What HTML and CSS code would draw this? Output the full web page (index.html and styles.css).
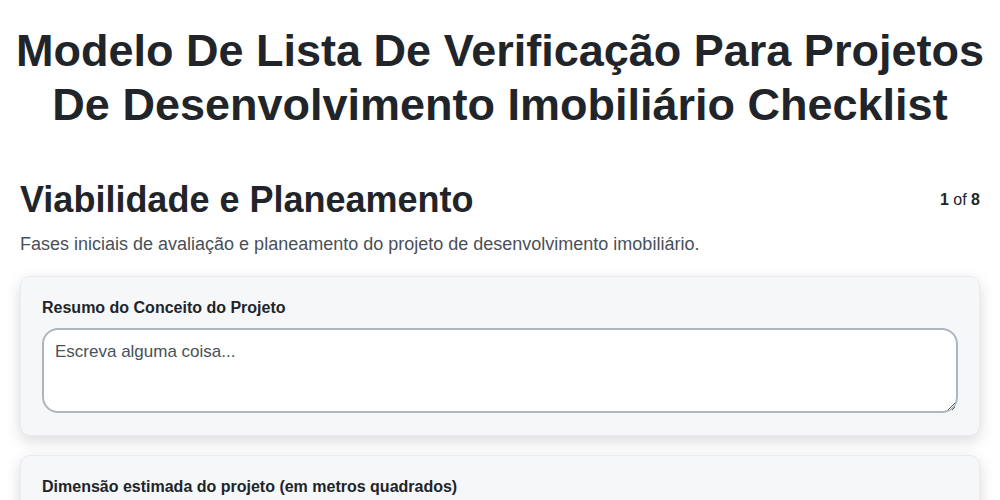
FILE: index.html
```html
<!DOCTYPE html>
<html>

<head>
    <meta charset="utf-8">
    <title>Modelo De Lista De Verificação</title>
    <link rel="stylesheet" href="styles.css">
</head>

<body>

    <h1 class="page_title">Modelo De Lista De Verificação Para Projetos De Desenvolvimento Imobiliário Checklist</h1>

    <div class="section_head">
        <h2 class="section_title">Viabilidade e Planeamento</h2>
        <div class="step_count"><b>1</b> of <b>8</b></div>
    </div>
    <p class="section_desc">Fases iniciais de avaliação e planeamento do projeto de desenvolvimento imobiliário.</p>

    <div class="card">
        <label class="label_text" for="fconcept">Resumo do Conceito do Projeto</label>
        <textarea class="text_area" id="fconcept" name="fconcept" placeholder="Escreva alguma coisa..."></textarea>
    </div>

    <div class="card">
        <label class="label_text" for="fsize">Dimensão estimada do projeto (em metros quadrados)</label>
        <input class="text_input" type="number" id="fsize" name="fsize" placeholder="0">
    </div>

</body>

</html>
```

FILE: styles.css
```css
body {
    margin: 0;
    padding: 0 20px;
    font-family: "Liberation Sans", Arial, sans-serif;
    color: #212529;
    background: #fff;
}

.page_title {
    margin: 24px -12px 46px;
    font-size: 45px;
    line-height: 54px;
    font-weight: bold;
    text-align: center;
}

.section_head {
    display: flex;
    justify-content: space-between;
    align-items: center;
}

.section_title {
    margin: 0;
    font-size: 36px;
    line-height: 44px;
    font-weight: bold;
}

.step_count {
    font-size: 16px;
}

.section_desc {
    margin: 12px 0 21px;
    font-size: 18px;
    color: #495057;
}

.card {
    display: flex;
    flex-direction: column;
    gap: 11px;
    margin-bottom: 19px;
    padding: 22px 21px 22px;
    background: #f6f7f9;
    border: 1px solid #e9ebef;
    border-radius: 10px;
    box-shadow: 0 5px 15px rgba(0, 0, 0, 0.15);
}

.label_text {
    font-size: 16px;
    font-weight: bold;
}

.text_area, .text_input {
    box-sizing: border-box;
    width: 100%;
    border: 2px solid #adb5bd;
    border-radius: 16px;
    background: #fff;
    padding: 12px 11px 10px;
    font-family: inherit;
    font-size: 17px;
    color: #212529;
}

.text_area {
    height: 85px;
    resize: vertical;
}

.text_area::placeholder, .text_input::placeholder {
    color: #495057;
}
```
